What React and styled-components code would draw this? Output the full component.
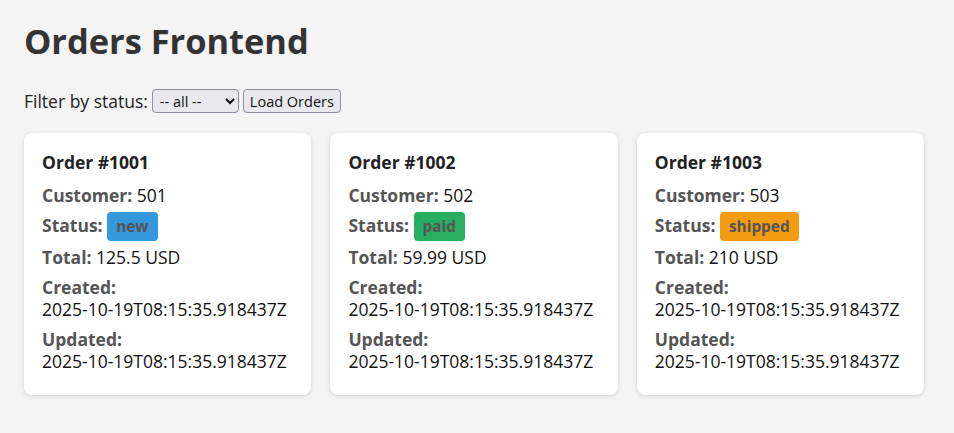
import React from "react";
import styled, { createGlobalStyle } from "styled-components";

const Global = createGlobalStyle`
  html, body { margin: 0; padding: 0; }
  body {
    background: #f4f4f4;
    font-family: "Open Sans", "Noto Sans", sans-serif;
    font-size: 17.5px;
    color: #333;
    padding: 24px;
  }
`;

const Page = styled.div`
  max-width: 900px;
`;

const Title = styled.h1`
  font-size: 34.4px;
  font-weight: 700;
  color: #333;
  margin: 0 0 31px;
  line-height: 34px;
`;

const Filters = styled.div`
  display: flex;
  align-items: center;
  gap: 4px;
  color: #222;
  line-height: 24px;
  margin-bottom: 20px;
`;

const Select = styled.select`
  font-family: "Open Sans", "Noto Sans", sans-serif;
  font-size: 14.5px;
  height: 24px;
  width: 87px;
  padding: 0 3px;
  border: 1px solid #8f8f9d;
  border-radius: 4px;
  background: #e9e9ed;
  color: #111;
`;

const Button = styled.button`
  font-family: "Open Sans", "Noto Sans", sans-serif;
  font-size: 14.5px;
  height: 24px;
  padding: 0 6px;
  border: 1px solid #8f8f9d;
  border-radius: 4px;
  background: #e9e9ed;
  color: #111;
`;

const Grid = styled.div`
  display: grid;
  grid-template-columns: repeat(3, 1fr);
  gap: 19.2px;
`;

const Card = styled.div`
  background: #fff;
  border-radius: 8px;
  box-shadow: 0 1px 4px rgba(0, 0, 0, 0.15);
  padding: 18px 18px 23px;
  color: #111;
`;

const CardTitle = styled.h3`
  margin: 0 0 11px;
  font-size: 1em;
  font-weight: 700;
  color: #222;
  line-height: 22px;
`;

const Line = styled.p`
  margin: 8px 0 0;
  line-height: 22px;
`;

const Label = styled.strong`
  color: #555;
`;

const Stamp = styled.span`
  white-space: nowrap;
`;

const colors = { new: "#3498db", paid: "#27ae60", shipped: "#f39c12" };

const Badge = styled.span`
  display: inline-block;
  background: ${(p) => colors[p.$status]};
  color: #555;
  font-weight: 700;
  font-size: 15.4px;
  line-height: 21px;
  padding: 4px 9px;
  border-radius: 4px;
  vertical-align: middle;
  margin: -4px 0 -3px;
`;

const orders = [
  { id: 1001, customer: 501, status: "new", total: "125.5" },
  { id: 1002, customer: 502, status: "paid", total: "59.99" },
  { id: 1003, customer: 503, status: "shipped", total: "210" },
];

const ts = "2025-10-19T08:15:35.918437Z";

export default function App() {
  return (
    <Page>
      <Global />
      <Title>Orders Frontend</Title>
      <Filters>
        <span>Filter by status:</span>
        <Select defaultValue="">
          <option value="">-- all --</option>
          <option value="new">new</option>
          <option value="paid">paid</option>
          <option value="shipped">shipped</option>
        </Select>
        <Button>Load Orders</Button>
      </Filters>
      <Grid>
        {orders.map((o) => (
          <Card key={o.id}>
            <CardTitle>Order #{o.id}</CardTitle>
            <Line>
              <Label>Customer:</Label> {o.customer}
            </Line>
            <Line>
              <Label>Status:</Label> <Badge $status={o.status}>{o.status}</Badge>
            </Line>
            <Line>
              <Label>Total:</Label> {o.total} USD
            </Line>
            <Line>
              <Label>Created:</Label> <Stamp>{ts}</Stamp>
            </Line>
            <Line>
              <Label>Updated:</Label> <Stamp>{ts}</Stamp>
            </Line>
          </Card>
        ))}
      </Grid>
    </Page>
  );
}
